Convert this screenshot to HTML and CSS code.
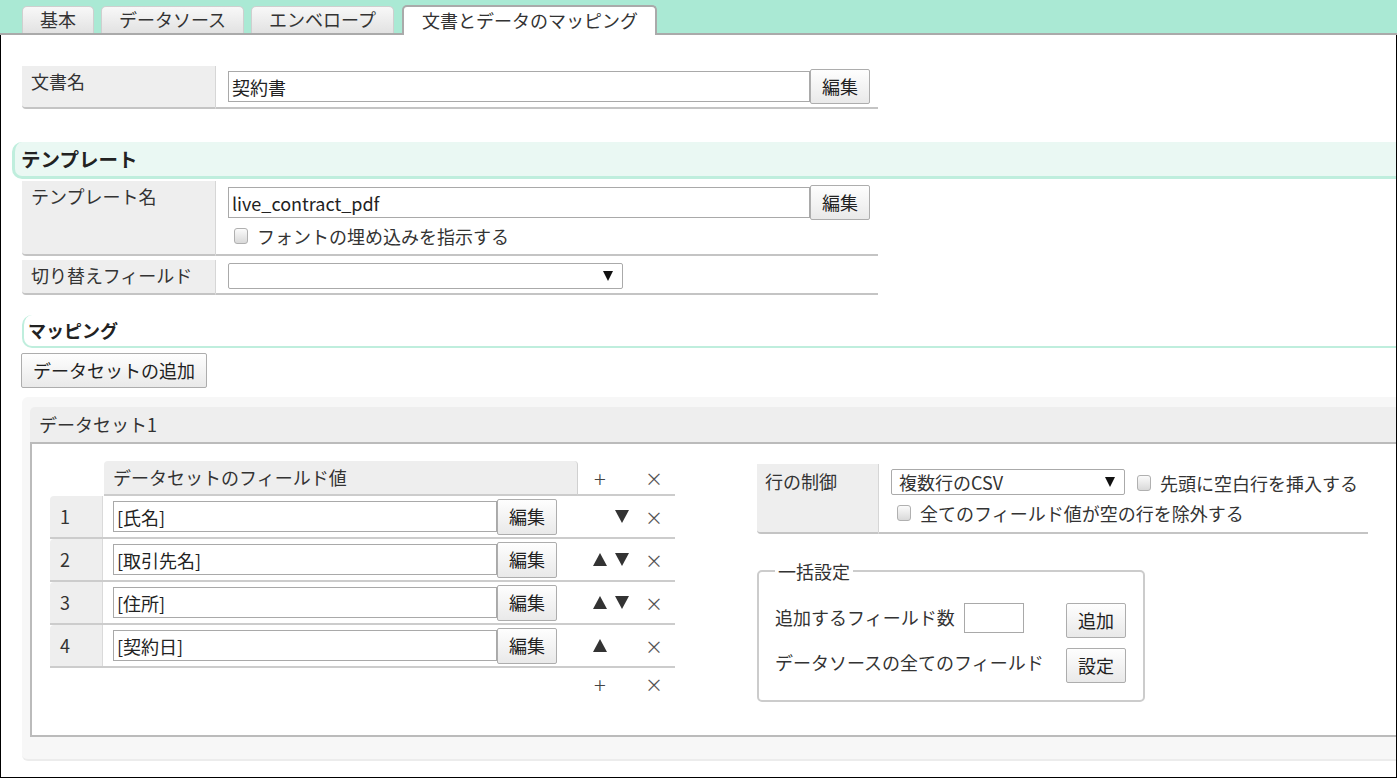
FILE: index.html
```html
<!DOCTYPE html>
<html lang="ja">
<head>
    <meta charset="UTF-8">
    <title>文書とデータのマッピング</title>
    <link rel="stylesheet" href="styles.css">
</head>
<body>
    <div class="tabs">
        <div class="tab">基本</div>
        <div class="tab">データソース</div>
        <div class="tab">エンベロープ</div>
        <div class="tab active">文書とデータのマッピング</div>
    </div>

    <div class="page">
        <div class="form-table">
            <div class="form-row">
                <div class="form-label">文書名</div>
                <div class="form-value">
                    <div class="input-line">
                        <input type="text" class="text-input wide" value="契約書">
                        <button class="btn">編集</button>
                    </div>
                </div>
            </div>
        </div>

        <h2 class="section-title">テンプレート</h2>
        <div class="form-table tight">
            <div class="form-row">
                <div class="form-label">テンプレート名</div>
                <div class="form-value tpl">
                    <div class="input-line">
                        <input type="text" class="text-input wide" value="live_contract_pdf">
                        <button class="btn">編集</button>
                    </div>
                    <label class="check-line">
                        <input type="checkbox" class="check">フォントの埋め込みを指示する
                    </label>
                </div>
            </div>
            <div class="form-row switch-row">
                <div class="form-label">切り替えフィールド</div>
                <div class="form-value sel">
                    <div class="select-box switch-select">
                        <span class="select-text"></span>
                        <span class="select-arrow"></span>
                    </div>
                </div>
            </div>
        </div>

        <h3 class="sub-title">マッピング</h3>
        <button class="btn add-dataset">データセットの追加</button>

        <div class="dataset">
            <div class="dataset-head">データセット1</div>
            <div class="dataset-body">
                <div class="field-table">
                    <div class="ft-head">
                        <div class="ft-spacer"></div>
                        <div class="ft-title">データセットのフィールド値</div>
                        <div class="ft-actions">
                            <span class="slot plus">+</span>
                            <span class="slot"></span>
                            <span class="slot x">×</span>
                        </div>
                    </div>

                    <div class="ft-row">
                        <div class="ft-num">1</div>
                        <div class="ft-value">
                            <input type="text" class="text-input field" value="[氏名]">
                            <button class="btn">編集</button>
                        </div>
                        <div class="ft-actions">
                            <span class="slot"></span>
                            <span class="slot"><i class="tri-down"></i></span>
                            <span class="slot x">×</span>
                        </div>
                    </div>
                    <div class="ft-row">
                        <div class="ft-num">2</div>
                        <div class="ft-value">
                            <input type="text" class="text-input field" value="[取引先名]">
                            <button class="btn">編集</button>
                        </div>
                        <div class="ft-actions">
                            <span class="slot"><i class="tri-up"></i></span>
                            <span class="slot"><i class="tri-down"></i></span>
                            <span class="slot x">×</span>
                        </div>
                    </div>
                    <div class="ft-row">
                        <div class="ft-num">3</div>
                        <div class="ft-value">
                            <input type="text" class="text-input field" value="[住所]">
                            <button class="btn">編集</button>
                        </div>
                        <div class="ft-actions">
                            <span class="slot"><i class="tri-up"></i></span>
                            <span class="slot"><i class="tri-down"></i></span>
                            <span class="slot x">×</span>
                        </div>
                    </div>
                    <div class="ft-row">
                        <div class="ft-num">4</div>
                        <div class="ft-value">
                            <input type="text" class="text-input field" value="[契約日]">
                            <button class="btn">編集</button>
                        </div>
                        <div class="ft-actions">
                            <span class="slot"><i class="tri-up"></i></span>
                            <span class="slot"></span>
                            <span class="slot x">×</span>
                        </div>
                    </div>

                    <div class="ft-foot">
                        <div class="ft-actions">
                            <span class="slot plus">+</span>
                            <span class="slot"></span>
                            <span class="slot x">×</span>
                        </div>
                    </div>
                </div>

                <div class="side">
                    <div class="form-row row-control">
                        <div class="form-label">行の制御</div>
                        <div class="form-value ctl">
                            <div class="ctl-line">
                                <div class="select-box csv-select">
                                    <span class="select-text">複数行のCSV</span>
                                    <span class="select-arrow"></span>
                                </div>
                                <label class="check-inline">
                                    <input type="checkbox" class="check">先頭に空白行を挿入する
                                </label>
                            </div>
                            <label class="check-line">
                                <input type="checkbox" class="check">全てのフィールド値が空の行を除外する
                            </label>
                        </div>
                    </div>

                    <fieldset class="bulk">
                        <legend>一括設定</legend>
                        <div class="bulk-grid">
                            <div class="bulk-label">
                                <span>追加するフィールド数</span>
                                <input type="text" class="text-input count">
                            </div>
                            <button class="btn">追加</button>
                            <div class="bulk-label">
                                <span>データソースの全てのフィールド</span>
                            </div>
                            <button class="btn">設定</button>
                        </div>
                    </fieldset>
                </div>
            </div>
        </div>
    </div>
</body>
</html>
```

FILE: styles.css
```css
* {
    margin: 0;
    padding: 0;
    box-sizing: border-box;
}

body {
    font-family: "Noto Sans CJK JP", "Noto Sans", sans-serif;
    font-size: 18px;
    line-height: 24px;
    color: #333;
    background: #fff;
    overflow: hidden;
}

input, button {
    font-family: inherit;
    font-size: 18px;
    color: #222;
}

/* tabs */
.tabs {
    height: 35px;
    background: #aae9d4;
    border-bottom: 2px solid #aaa;
    display: flex;
    align-items: flex-end;
    gap: 7px;
    padding-left: 22px;
}

.tab {
    height: 27px;
    padding: 0 17px;
    line-height: 25px;
    border: 1px solid #cfcfcf;
    border-bottom: none;
    border-radius: 5px 5px 0 0;
    background: linear-gradient(#f8f8f8, #e2e2e2);
    color: #333;
}

.tab.active {
    height: 30px;
    margin-bottom: -2px;
    margin-left: 1px;
    padding: 0 17px 0 18px;
    line-height: 27px;
    background: #fff;
    border: 2px solid #aaa;
    border-bottom: none;
}

/* page */
.page {
    height: 743px;
    border: 1px solid #000;
    border-top: none;
    padding: 31px 0 0 21px;
    overflow: hidden;
}

.form-table {
    width: 856px;
}

.form-row {
    display: flex;
}

.form-label {
    width: 194px;
    flex-shrink: 0;
    background: #eee;
    border-right: 1px solid #d6d6d6;
    border-bottom: 2px solid #c4c4c4;
    border-radius: 0 0 0 4px;
    padding: 3px 0 0 9px;
}

.form-value {
    flex: 1;
    border-bottom: 2px solid #c4c4c4;
    padding: 3px 0 3px 12px;
}

.input-line {
    display: flex;
    align-items: center;
}

.text-input {
    height: 31px;
    border: 1px solid #a9a9a9;
    padding: 0 3px;
    outline: none;
    background: #fff;
}

.text-input.wide {
    width: 582px;
}

.btn {
    height: 35px;
    padding: 0 11px;
    border: 1px solid #adadad;
    border-radius: 2px;
    background: linear-gradient(#fefefe, #e9e9e9);
    cursor: pointer;
    line-height: 33px;
}

.input-line .btn {
    width: 60px;
    padding: 0;
}

.check {
    appearance: none;
    -webkit-appearance: none;
    width: 14px;
    height: 16px;
    border: 1px solid #b0b0b0;
    border-radius: 3px;
    background: linear-gradient(#fbfbfb, #d9d9d9);
    flex-shrink: 0;
}

.check-line {
    display: flex;
    align-items: center;
    height: 24px;
}

.check-line .check {
    margin: 0 9px 0 6px;
}

/* template section */
.section-title {
    margin: 33px 0 2px -10px;
    height: 37px;
    background: #eaf8f3;
    border-left: 3px solid #bfeedd;
    border-bottom: 3px solid #bfeedd;
    border-radius: 10px 0 0 10px;
    padding-left: 6px;
    font-size: 19.5px;
    line-height: 33px;
    font-weight: bold;
    color: #222;
}

.form-value.tpl {
    padding: 4px 0 6px 12px;
}

.form-value.tpl .check-line {
    margin-top: 4px;
}

.switch-row {
    margin-top: 4px;
}

.form-value.sel {
    padding: 3px 0 4px 12px;
}

.select-box {
    height: 26px;
    border: 1px solid #aaa;
    border-radius: 2px;
    display: flex;
    align-items: center;
    justify-content: space-between;
    padding: 0 9px 0 7px;
    background: #fff;
}

.select-arrow {
    width: 0;
    height: 0;
    border-left: 5px solid transparent;
    border-right: 5px solid transparent;
    border-top: 10px solid #111;
}

.switch-select {
    width: 395px;
}

/* mapping */
.sub-title {
    margin-top: 20px;
    height: 33px;
    border-left: 2px solid #bfeedd;
    border-bottom: 2px solid #bfeedd;
    border-radius: 10px 0 0 10px;
    padding-left: 4px;
    font-size: 18px;
    line-height: 31px;
    font-weight: bold;
    color: #222;
}

.add-dataset {
    margin: 5px 0 0 -1px;
    display: block;
}

.dataset {
    margin-top: 9px;
    background: #f7f7f7;
    border-radius: 6px 0 0 6px;
    border-bottom: 2px solid #ececec;
    padding: 10px 0 22px 8px;
}

.dataset-head {
    height: 35px;
    line-height: 35px;
    background: #eee;
    border-radius: 5px 0 0 0;
    padding-left: 9px;
}

.dataset-body {
    height: 295px;
    background: #fff;
    border: 2px solid #bbb;
    border-right: none;
    padding: 17px 0 0 18px;
    display: flex;
    gap: 82px;
}

/* field table */
.field-table {
    width: 625px;
    flex-shrink: 0;
}

.ft-head {
    display: flex;
    height: 35px;
}

.ft-spacer {
    width: 54px;
}

.ft-title {
    width: 474px;
    height: 33px;
    line-height: 33px;
    background: #eee;
    border-radius: 4px 4px 0 0;
    border-right: 1px solid #d0d0d0;
    padding-left: 9px;
}

.ft-head .ft-title,
.ft-head .ft-actions {
    border-bottom: 2px solid #ccc;
    height: 35px;
}

.ft-actions {
    width: 97px;
    display: flex;
    align-items: center;
    padding-left: 15px;
    color: #444;
}

.slot {
    width: 14px;
    display: flex;
    justify-content: center;
    align-items: center;
    margin-right: 8px;
}

.slot.plus {
    font-size: 22px;
    font-weight: 300;
    color: #444;
}

.slot.x {
    margin-left: 10px;
    margin-right: 0;
    color: #555;
}

.ft-row {
    display: flex;
    height: 43px;
    border-bottom: 2px solid #ccc;
}

.ft-num {
    width: 53px;
    background: #eee;
    border-right: 1px solid #dadada;
    border-radius: 4px 0 0 0;
    padding-left: 10px;
    line-height: 41px;
    color: #333;
}

.ft-value {
    width: 475px;
    display: flex;
    align-items: center;
    padding-left: 10px;
}

.text-input.field {
    width: 384px;
}

.ft-value .btn {
    width: 60px;
    height: 36px;
    padding: 0;
}

.tri-up {
    width: 0;
    height: 0;
    border-left: 7px solid transparent;
    border-right: 7px solid transparent;
    border-bottom: 13px solid #333;
}

.tri-down {
    width: 0;
    height: 0;
    border-left: 7px solid transparent;
    border-right: 7px solid transparent;
    border-top: 13px solid #333;
}

.ft-foot {
    display: flex;
    justify-content: flex-end;
    height: 31px;
}

/* right side */
.side {
    margin-top: 3px;
    width: 611px;
}

.row-control .form-label {
    width: 122px;
    padding: 5px 0 0 8px;
}

.form-value.ctl {
    padding: 5px 0 7px 12px;
}

.ctl-line {
    display: flex;
    align-items: flex-start;
}

.csv-select {
    width: 234px;
}

.check-inline {
    display: flex;
    align-items: center;
    margin-left: 12px;
    height: 24px;
    margin-top: 2px;
}

.check-inline .check {
    margin-right: 9px;
}

.form-value.ctl .check-line {
    margin-top: 6px;
}

.bulk {
    margin-top: 27px;
    width: 388px;
    border: 2px solid #ccc;
    border-radius: 5px;
    padding: 22px 0 17px 16px;
}

.bulk legend {
    padding: 0 3px;
    line-height: 20px;
}

.bulk-grid {
    display: grid;
    grid-template-columns: 291px 60px;
    row-gap: 10px;
}

.bulk-label {
    display: flex;
    align-items: flex-start;
    gap: 9px;
    padding-top: 2px;
}

.bulk-label span {
    line-height: 24px;
}

.text-input.count {
    width: 60px;
    height: 30px;
    margin-top: -2px;
}

.bulk-grid .btn {
    width: 60px;
    padding: 0;
}
```
